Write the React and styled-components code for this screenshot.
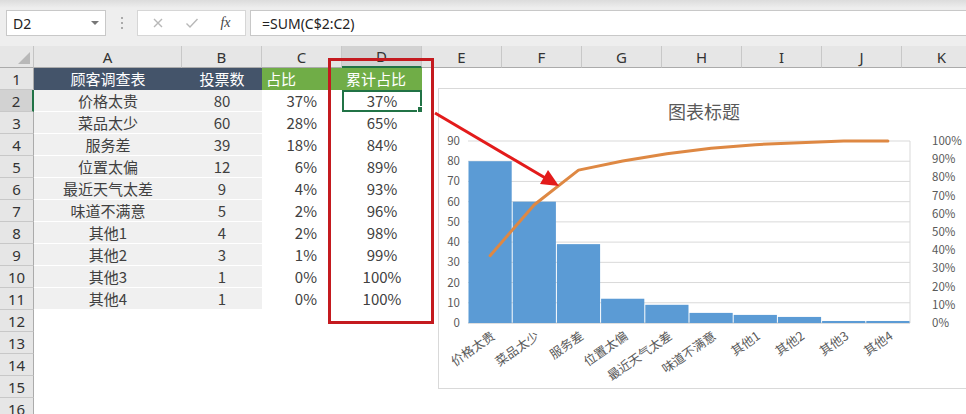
import styled, { createGlobalStyle } from 'styled-components';

const GlobalStyle = createGlobalStyle`
  html, body {
    margin: 0;
    padding: 0;
    background: #fff;
    overflow: hidden;
  }
  body {
    width: 966px;
    height: 414px;
    font-family: "Noto Sans", "Noto Sans CJK SC", sans-serif;
  }
`;

const COLS = '34px 148px 80px 80px 80px 80px 80px 80px 80px 80px 80px 80px';
const LETTERS = ['A', 'B', 'C', 'D', 'E', 'F', 'G', 'H', 'I', 'J', 'K'];

const rows = [
  ['价格太贵', 80, '37%', '37%'],
  ['菜品太少', 60, '28%', '65%'],
  ['服务差', 39, '18%', '84%'],
  ['位置太偏', 12, '6%', '89%'],
  ['最近天气太差', 9, '4%', '93%'],
  ['味道不满意', 5, '2%', '96%'],
  ['其他1', 4, '2%', '98%'],
  ['其他2', 3, '1%', '99%'],
  ['其他3', 1, '0%', '100%'],
  ['其他4', 1, '0%', '100%'],
];

const Window = styled.div`
  width: 966px;
  height: 414px;
  overflow: hidden;
  display: flex;
  flex-direction: column;
  background: #fff;
`;

const FormulaBar = styled.div`
  height: 46px;
  flex-shrink: 0;
  box-sizing: border-box;
  padding: 10px 0 10px 6px;
  background: linear-gradient(#dcdcdc 0, #eeeeee 8px, #eeeeee 100%);
  display: flex;
  align-items: stretch;
`;

const NameBox = styled.div`
  width: 100px;
  box-sizing: border-box;
  background: #fff;
  border: 1px solid #c8c8c8;
  display: flex;
  align-items: center;
  justify-content: space-between;
  padding: 0 6px 0 6px;
  font-size: 14px;
  color: #222;
`;

const DropArrow = styled.span`
  width: 0;
  height: 0;
  border-left: 4px solid transparent;
  border-right: 4px solid transparent;
  border-top: 4px solid #777;
`;

const Grip = styled.div`
  width: 31px;
  display: flex;
  flex-direction: column;
  align-items: center;
  justify-content: center;
  gap: 3px;

  span {
    width: 2px;
    height: 2px;
    background: #aaa;
  }
`;

const FxBox = styled.div`
  width: 109px;
  box-sizing: border-box;
  background: #fff;
  border: 1px solid #d6d6d6;
  display: flex;
  align-items: center;
  justify-content: space-around;
  padding: 0 4px;
`;

const FxGlyph = styled.span`
  font-family: "Liberation Serif", serif;
  font-style: italic;
  font-size: 14px;
  color: #444;
`;

const FormulaInput = styled.div`
  flex: 1;
  margin-left: 4px;
  background: #fff;
  border-top: 1px solid #c8c8c8;
  border-bottom: 1px solid #c8c8c8;
  border-left: 1px solid #c8c8c8;
  display: flex;
  align-items: center;
  padding-left: 11px;
  font-size: 14px;
  color: #222;
`;

const Sheet = styled.div`
  position: relative;
  flex: 1;
`;

const Row = styled.div`
  display: grid;
  grid-template-columns: ${COLS};
  height: 22px;
`;

const Corner = styled.div`
  background: #e6e6e6;
  border-right: 1px solid #c4c4c4;
  border-bottom: 1px solid #ababab;
  position: relative;

  &::after {
    content: '';
    position: absolute;
    right: 3px;
    bottom: 3px;
    border-left: 12px solid transparent;
    border-bottom: 12px solid #b8b8b8;
  }
`;

const ColHead = styled.div`
  background: ${(p) => (p.$active ? '#d2d2d2' : '#e6e6e6')};
  border-right: 1px solid #c8c8c8;
  border-bottom: ${(p) => (p.$active ? '2px solid #217346' : '1px solid #ababab')};
  box-sizing: border-box;
  display: flex;
  align-items: center;
  justify-content: center;
  font-size: 15px;
  color: #333;
`;

const RowHead = styled.div`
  background: ${(p) => (p.$active ? '#d2d2d2' : '#e6e6e6')};
  border-right: ${(p) => (p.$active ? '2px solid #217346' : '1px solid #ababab')};
  border-bottom: 1px solid #c8c8c8;
  box-sizing: border-box;
  display: flex;
  align-items: center;
  justify-content: center;
  font-size: 15px;
  color: #333;
`;

const fills = {
  dark: '#44546a',
  green: '#70ad47',
  band: '#f0f0f0',
  none: '#fff',
};

const Cell = styled.div`
  position: relative;
  box-sizing: border-box;
  background: ${(p) => fills[p.$fill || 'none']};
  border-bottom: 1px solid ${(p) => (p.$fill === 'band' ? '#fff' : 'transparent')};
  color: ${(p) => (p.$fill === 'dark' || p.$fill === 'green' ? '#fff' : '#404040')};
  font-family: "Noto Sans CJK SC", "Noto Sans", sans-serif;
  font-size: 15px;
  line-height: 21px;
  display: flex;
  align-items: center;
  justify-content: ${(p) => p.$align || 'center'};
  padding: ${(p) => (p.$align === 'flex-end' ? '0 25px 0 0' : p.$align === 'flex-start' ? '0 0 0 4px' : '0')};
  white-space: nowrap;
  outline: ${(p) => (p.$selected ? '2px solid #217346' : 'none')};
  outline-offset: -2px;

  &::after {
    content: '';
    display: ${(p) => (p.$selected ? 'block' : 'none')};
    position: absolute;
    right: -3px;
    bottom: -3px;
    width: 6px;
    height: 6px;
    background: #217346;
    border: 1px solid #fff;
  }
`;

const Highlight = styled.div`
  position: absolute;
  left: 328px;
  top: 12px;
  width: 106px;
  height: 266px;
  box-sizing: border-box;
  border: 3px solid #c41a1f;
  pointer-events: none;
`;

const ArrowLayer = styled.svg`
  position: absolute;
  left: 0;
  top: 0;
  width: 966px;
  height: 368px;
  pointer-events: none;
  z-index: 3;
`;

const ChartBox = styled.div`
  position: absolute;
  left: 438px;
  top: 42px;
  width: 540px;
  height: 301px;
  box-sizing: border-box;
  background: #fff;
  border: 1px solid #d9d9d9;
  z-index: 2;
`;

const ChartSvg = styled.svg`
  display: block;
  font-family: "Noto Sans CJK SC", "Noto Sans", sans-serif;
`;

function Chart() {
  const left = 29;
  const right = 471;
  const top = 52;
  const bottom = 234;
  const h = bottom - top;
  const w = (right - left) / rows.length;
  const points = rows.map((r, i) => {
    const p = parseInt(r[3], 10) / 100;
    return `${left + (i + 0.5) * w},${bottom - p * h}`;
  });

  return (
    <ChartSvg width="540" height="301">
      <text x="265" y="30" textAnchor="middle" fontSize="18" fill="#595959">图表标题</text>
      {Array.from({ length: 10 }, (_, k) => {
        const y = bottom - (k * h) / 9;
        return (
          <g key={k}>
            <line x1={left} x2={right} y1={y} y2={y} stroke={k === 0 ? '#bfbfbf' : '#d9d9d9'} strokeWidth="1" />
            <text x={left - 8} y={y + 4} textAnchor="end" fontSize="11.5" fill="#595959">{k * 10}</text>
          </g>
        );
      })}
      {Array.from({ length: 11 }, (_, k) => {
        const y = bottom - (k * h) / 10;
        return (
          <text key={k} x={right + 22} y={y + 4} fontSize="11.5" fill="#595959">{k * 10}%</text>
        );
      })}
      <line x1={right} x2={right} y1={top} y2={bottom} stroke="#d9d9d9" />
      {rows.map((r, i) => {
        const bh = (r[1] / 90) * h;
        return (
          <rect key={r[0]} x={left + i * w + 0.5} y={bottom - bh} width={w - 1} height={Math.max(bh, 1)} fill="#5b9bd5" />
        );
      })}
      <polyline points={points.join(' ')} fill="none" stroke="#de8843" strokeWidth="3" strokeLinejoin="round" strokeLinecap="round" />
      {rows.map((r, i) => {
        const x = left + (i + 0.5) * w + 6;
        const y = 249;
        return (
          <text key={r[0]} x={x} y={y} textAnchor="end" fontSize="12.5" fill="#595959" transform={`rotate(-35 ${x} ${y})`}>
            {r[0]}
          </text>
        );
      })}
    </ChartSvg>
  );
}

export default function App() {
  return (
    <>
      <GlobalStyle />
      <Window>
        <FormulaBar>
          <NameBox>
            D2
            <DropArrow />
          </NameBox>
          <Grip>
            <span />
            <span />
            <span />
          </Grip>
          <FxBox>
            <svg width="12" height="12" viewBox="0 0 12 12">
              <path d="M2 2 L10 10 M10 2 L2 10" stroke="#b8b8b8" strokeWidth="1.4" fill="none" />
            </svg>
            <svg width="14" height="12" viewBox="0 0 14 12">
              <path d="M1.5 6.5 L5 10 L12.5 2" stroke="#b8b8b8" strokeWidth="1.4" fill="none" />
            </svg>
            <FxGlyph>fx</FxGlyph>
          </FxBox>
          <FormulaInput>=SUM(C$2:C2)</FormulaInput>
        </FormulaBar>

        <Sheet>
          <Row>
            <Corner />
            {LETTERS.map((l) => (
              <ColHead key={l} $active={l === 'D'}>{l}</ColHead>
            ))}
          </Row>
          <Row>
            <RowHead>1</RowHead>
            <Cell $fill="dark">顾客调查表</Cell>
            <Cell $fill="dark">投票数</Cell>
            <Cell $fill="green" $align="flex-start">占比</Cell>
            <Cell $fill="green" $align="flex-start">累计占比</Cell>
            {LETTERS.slice(4).map((l) => <Cell key={l} />)}
          </Row>
          {rows.map((r, i) => (
            <Row key={r[0]}>
              <RowHead $active={i === 0}>{i + 2}</RowHead>
              <Cell $fill="band">{r[0]}</Cell>
              <Cell $fill="band">{r[1]}</Cell>
              <Cell $align="flex-end">{r[2]}</Cell>
              <Cell $selected={i === 0}>{r[3]}</Cell>
              {LETTERS.slice(4).map((l) => <Cell key={l} />)}
            </Row>
          ))}
          {[12, 13, 14, 15, 16].map((n) => (
            <Row key={n}>
              <RowHead>{n}</RowHead>
              {LETTERS.map((l) => <Cell key={l} />)}
            </Row>
          ))}

          <Highlight />
          <ChartBox>
            <Chart />
          </ChartBox>
          <ArrowLayer viewBox="0 0 966 368">
            <line x1="435" y1="67" x2="547" y2="133" stroke="#e31b1b" strokeWidth="3" />
            <polygon points="559,140 540,138 548,124" fill="#e31b1b" />
          </ArrowLayer>
        </Sheet>
      </Window>
    </>
  );
}
